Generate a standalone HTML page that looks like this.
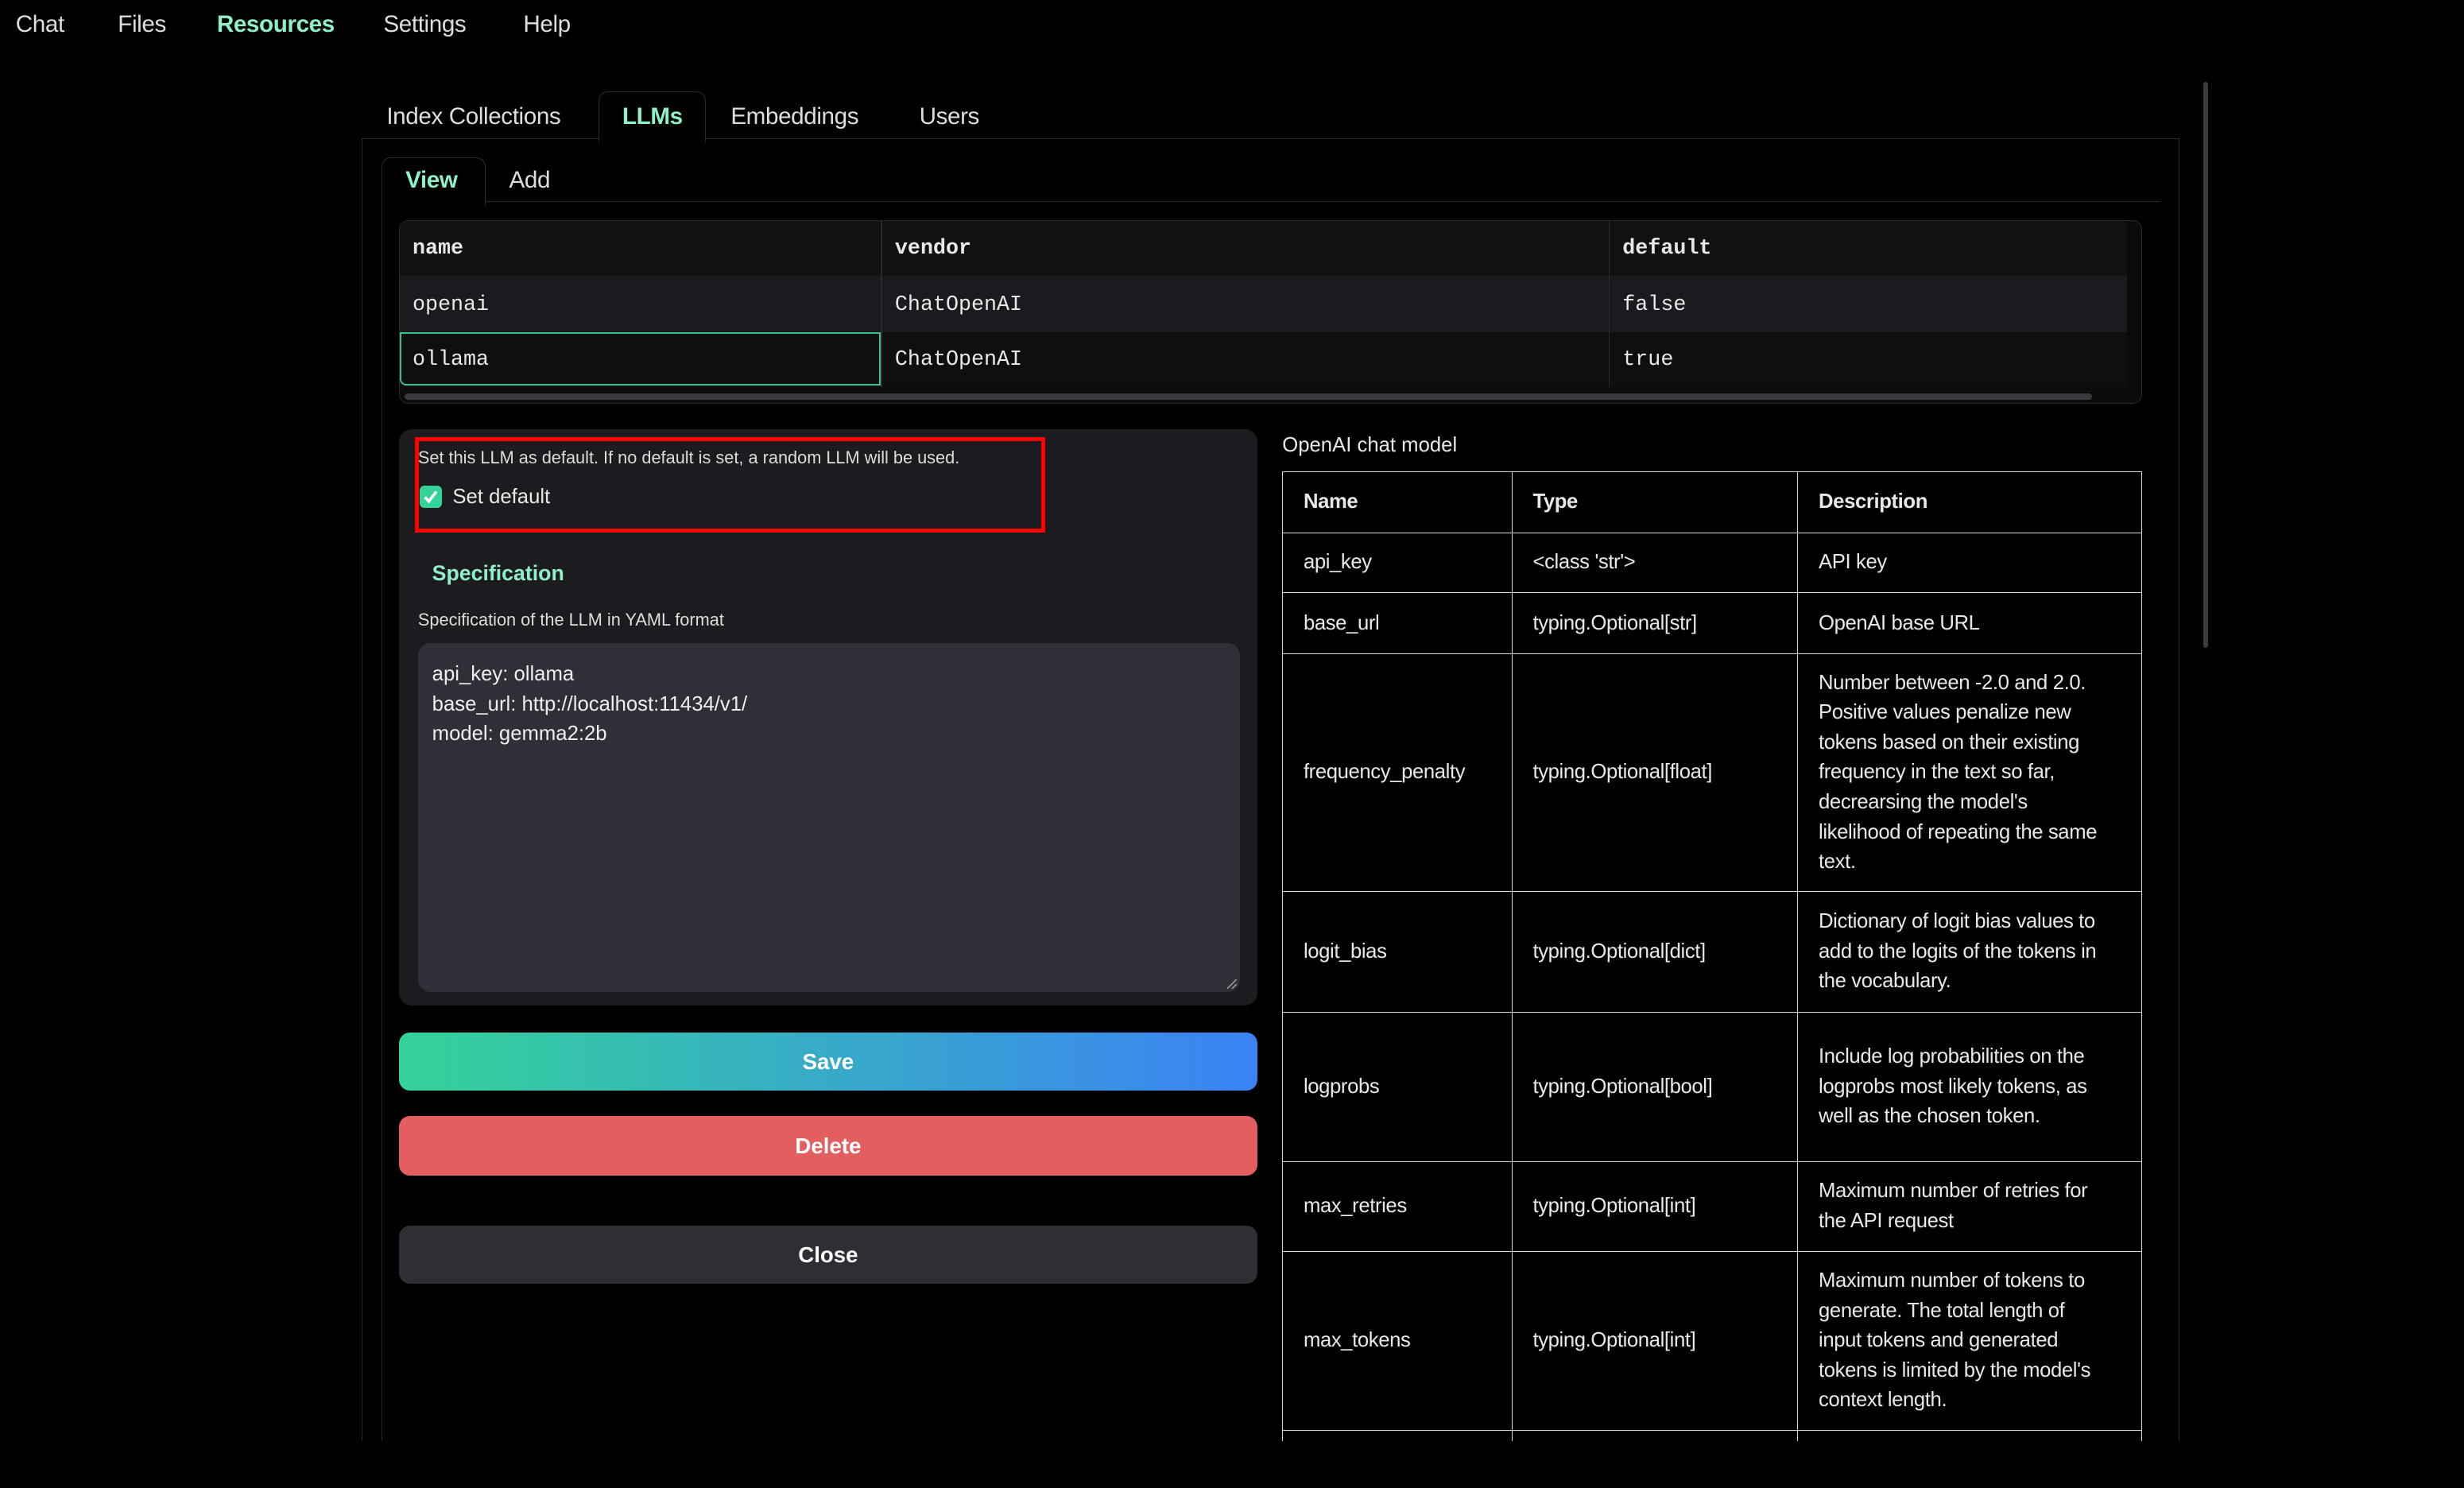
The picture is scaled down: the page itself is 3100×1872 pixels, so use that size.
<!DOCTYPE html>
<html><head><meta charset="utf-8"><style>
html,body{margin:0;padding:0;background:#000;width:3100px;height:1872px;overflow:hidden}
#w{position:relative;width:1568px;height:947px;zoom:1.97704;font-family:"Liberation Sans",sans-serif;color:#e8e8ea}
.a{position:absolute;white-space:nowrap}
.mono{font-family:"Liberation Mono",monospace;font-size:13.5px}
.t{font-size:15px;letter-spacing:-0.2px}
table.d{position:absolute;left:816px;top:300px;width:547px;border-collapse:collapse;font-size:13px;letter-spacing:-0.2px}
table.d td{border:1px solid #d8d8d8;padding:0 13px;line-height:19px;vertical-align:middle;white-space:normal}
table.d td:nth-child(3){padding-right:24px}
</style></head><body><div id="w">
<div class="a t" style="left:10px;top:7px;color:#ddd">Chat</div>
<div class="a t" style="left:75px;top:7px;color:#ddd">Files</div>
<div class="a t" style="left:138px;top:7px;color:#8ff0c8;font-weight:bold">Resources</div>
<div class="a t" style="left:244px;top:7px;color:#ddd">Settings</div>
<div class="a t" style="left:333px;top:7px;color:#ddd">Help</div>

<div class="a" style="left:230px;top:88px;width:1156px;height:840px;border:1px solid #2c2c30;border-bottom:none"></div>
<div class="a" style="left:381px;top:58px;width:67px;height:32px;border:1px solid #2c2c30;border-bottom:none;border-radius:6px 6px 0 0;background:#000"></div>
<div class="a t" style="left:246px;top:66px;color:#ddd">Index Collections</div>
<div class="a t" style="left:396px;top:66px;color:#8ff0c8;font-weight:bold">LLMs</div>
<div class="a t" style="left:465px;top:66px;color:#ddd">Embeddings</div>
<div class="a t" style="left:585px;top:66px;color:#ddd">Users</div>

<div class="a" style="left:308px;top:128px;width:1067px;height:0;border-top:1px solid #2c2c30"></div>
<div class="a" style="left:243px;top:100px;width:65px;height:30px;border:1px solid #2c2c30;border-bottom:none;border-radius:6px 6px 0 0;background:#000"></div>
<div class="a" style="left:243px;top:128px;width:0;height:800px;border-left:1px solid #2c2c30"></div>
<div class="a t" style="left:258px;top:106px;color:#8ff0c8;font-weight:bold">View</div>
<div class="a t" style="left:324px;top:106px;color:#ddd">Add</div>

<div class="a" style="left:254px;top:140px;width:1108px;height:116px;border:1px solid #2a2a2e;border-radius:6px;background:#0b0b0c;overflow:hidden">
 <div class="a" style="left:0;top:0;width:1099px;height:35px;background:#111113"></div>
 <div class="a" style="left:0;top:35px;width:1099px;height:36px;background:#1b1b1f"></div>
 <div class="a" style="left:0;top:71px;width:1099px;height:35px;background:#0f0f11"></div>
 <div class="a" style="left:306px;top:0;width:1px;height:106px;background:#2a2a2e"></div>
 <div class="a" style="left:769px;top:0;width:1px;height:106px;background:#2a2a2e"></div>
 <div class="a" style="left:0;top:71px;width:304px;height:32px;border:1.5px solid #34c38f;border-radius:0 0 0 4px"></div>
 <div class="a" style="left:3px;top:110px;width:1074px;height:4px;background:#3a3a40;border-radius:2px"></div>
 <div class="a mono" style="left:8px;top:10px;font-weight:bold">name</div>
 <div class="a mono" style="left:315px;top:10px;font-weight:bold">vendor</div>
 <div class="a mono" style="left:778px;top:10px;font-weight:bold">default</div>
 <div class="a mono" style="left:8px;top:46px">openai</div>
 <div class="a mono" style="left:315px;top:46px">ChatOpenAI</div>
 <div class="a mono" style="left:778px;top:46px">false</div>
 <div class="a mono" style="left:8px;top:81px">ollama</div>
 <div class="a mono" style="left:315px;top:81px">ChatOpenAI</div>
 <div class="a mono" style="left:778px;top:81px">true</div>
</div>

<div class="a" style="left:254px;top:273px;width:546px;height:367px;background:#1c1c20;border-radius:8px"></div>
<div class="a" style="left:264px;top:278px;width:396px;height:56px;border:3px solid #f00"></div>
<div class="a" style="left:266px;top:285px;font-size:11px;color:#ddd">Set this LLM as default. If no default is set, a random LLM will be used.</div>
<div class="a" style="left:267px;top:309px;width:14px;height:14px;background:#34d399;border-radius:3px"><svg width="14" height="14" viewBox="0 0 14 14" style="position:absolute;left:0;top:0"><path d="M3.3 7.3 L5.8 10 L10.6 3.8" stroke="#fff" stroke-width="1.8" fill="none"/></svg></div>
<div class="a" style="left:288px;top:309px;font-size:13px;color:#e8e8e8">Set default</div>
<div class="a" style="left:275px;top:357px;font-size:13.5px;color:#8ff0c8;font-weight:bold">Specification</div>
<div class="a" style="left:266px;top:388px;font-size:11px;color:#ddd">Specification of the LLM in YAML format</div>
<div class="a" style="left:266px;top:409px;width:523px;height:222px;background:#2f2f38;border-radius:8px"></div>
<svg class="a" style="left:780px;top:622px" width="8" height="8" viewBox="0 0 8 8"><path d="M1 7 L7 1 M4 7 L7 4" stroke="#999" stroke-width="0.8"/></svg>
<div class="a" style="left:275px;top:420px;font-size:13px;line-height:19px;color:#eee">api_key: ollama<br>base_url: http://localhost:11434/v1/<br>model: gemma2:2b</div>
<div class="a" style="left:254px;top:657px;width:546px;height:37px;border-radius:7px;background:linear-gradient(90deg,#34d399,#3b82f6);font-size:14px;font-weight:bold;text-align:center;line-height:37px;color:#fff">Save</div>
<div class="a" style="left:254px;top:710px;width:546px;height:38px;border-radius:7px;background:#e35f5f;font-size:14px;font-weight:bold;text-align:center;line-height:38px;color:#fff">Delete</div>
<div class="a" style="left:254px;top:780px;width:546px;height:37px;border-radius:7px;background:#2e2e35;font-size:14px;font-weight:bold;text-align:center;line-height:37px;color:#fff">Close</div>

<div class="a" style="left:816px;top:276px;font-size:13px;color:#e8e8e8">OpenAI chat model</div>
<table class="d">
<colgroup><col style="width:146px"><col style="width:182px"><col style="width:219px"></colgroup>
<tr style="height:39px;font-weight:bold"><td>Name</td><td>Type</td><td>Description</td></tr>
<tr style="height:38px"><td>api_key</td><td>&lt;class 'str'&gt;</td><td>API key</td></tr>
<tr style="height:39px"><td>base_url</td><td>typing.Optional[str]</td><td>OpenAI base URL</td></tr>
<tr style="height:151px"><td>frequency_penalty</td><td>typing.Optional[float]</td><td>Number between -2.0 and 2.0. Positive values penalize new tokens based on their existing frequency in the text so far, decrearsing the model's likelihood of repeating the same text.</td></tr>
<tr style="height:77px"><td>logit_bias</td><td>typing.Optional[dict]</td><td>Dictionary of logit bias values to add to the logits of the tokens in the vocabulary.</td></tr>
<tr style="height:95px"><td>logprobs</td><td>typing.Optional[bool]</td><td>Include log probabilities on the logprobs most likely tokens, as well as the chosen token.</td></tr>
<tr style="height:57px"><td>max_retries</td><td>typing.Optional[int]</td><td>Maximum number of retries for the API request</td></tr>
<tr style="height:114px"><td>max_tokens</td><td>typing.Optional[int]</td><td>Maximum number of tokens to generate. The total length of input tokens and generated tokens is limited by the model's context length.</td></tr>
<tr style="height:40px"><td></td><td></td><td></td></tr>
</table>
<div class="a" style="left:0;top:917px;width:1568px;height:40px;background:#000"></div>
<div class="a" style="left:1402px;top:52px;width:3px;height:360px;background:#3a3a40;border-radius:2px"></div>
</div></body></html>
